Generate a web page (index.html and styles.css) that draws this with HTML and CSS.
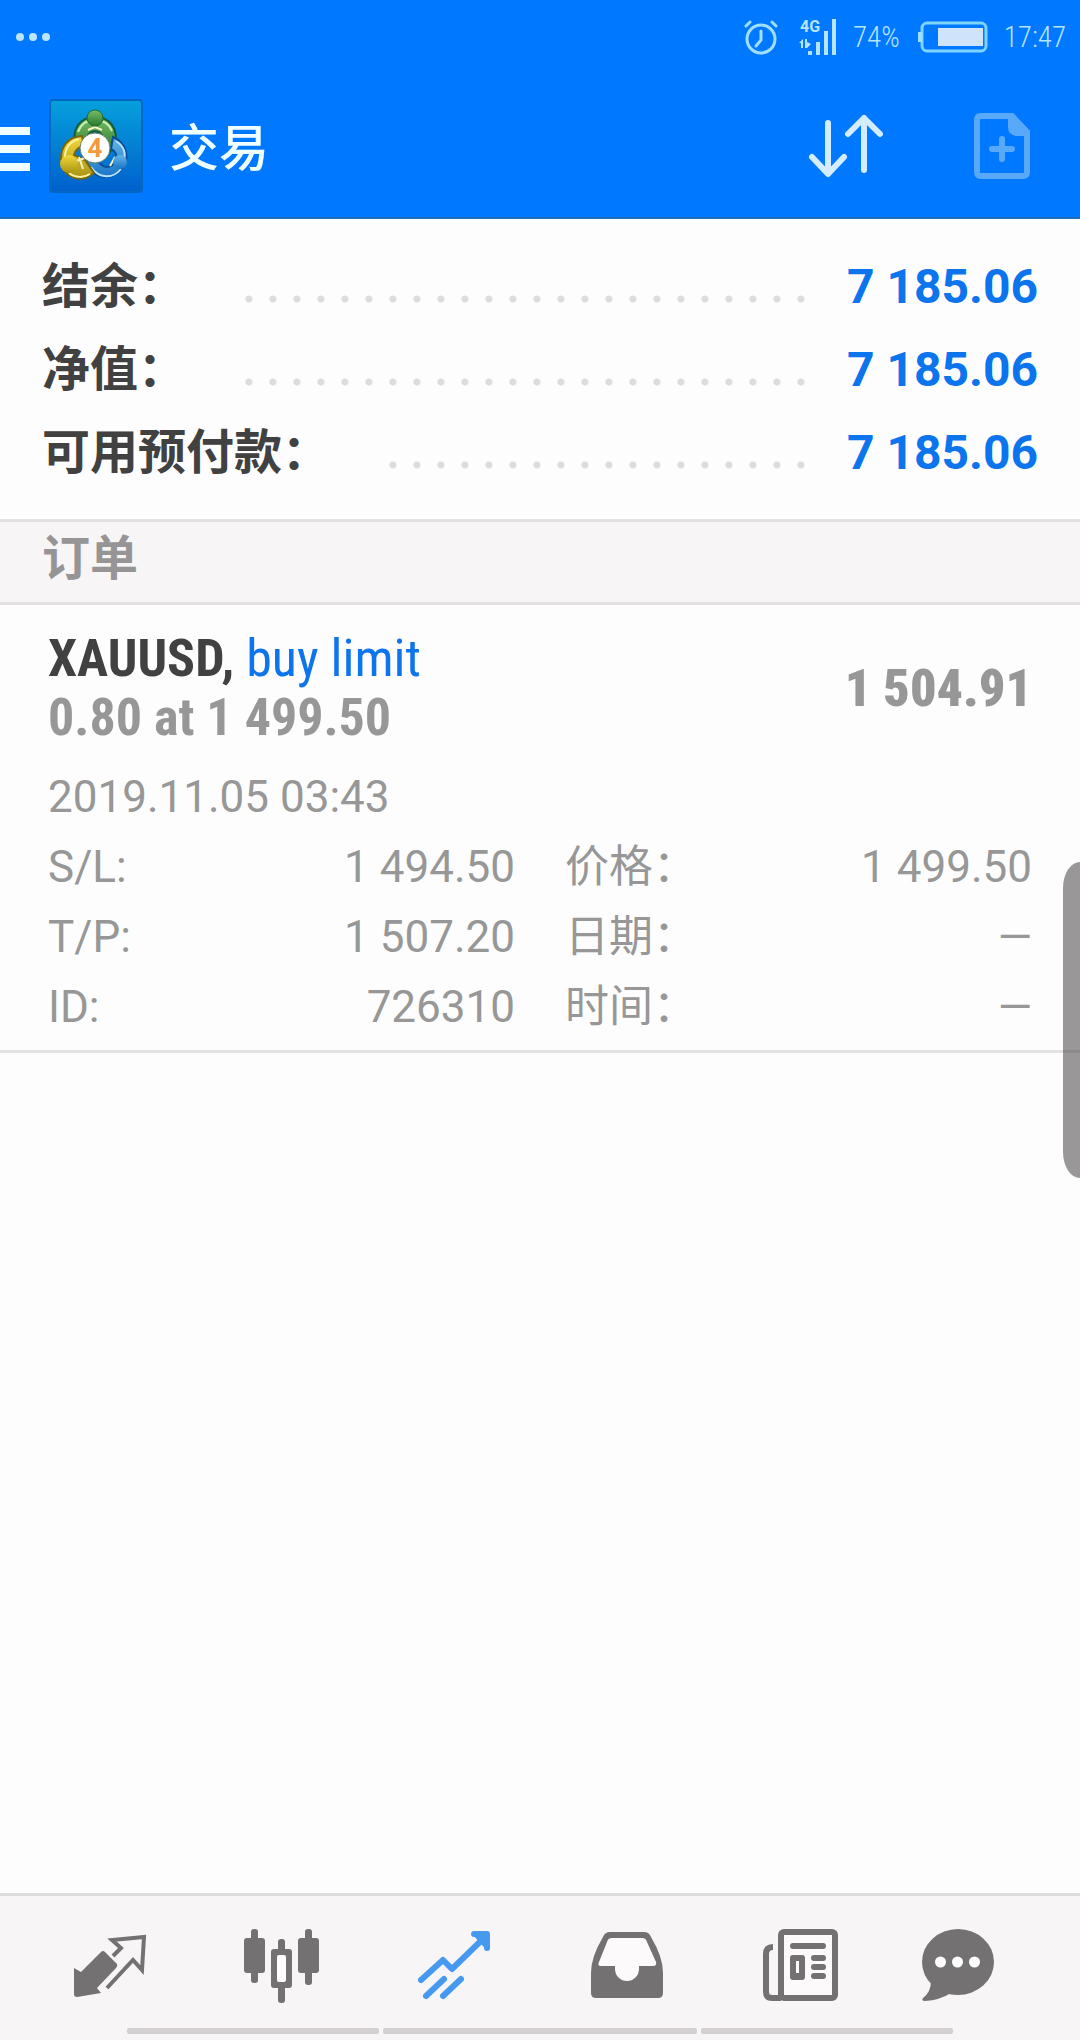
FILE: index.html
```html
<!DOCTYPE html>
<html lang="zh-CN">
<head>
  <meta charset="UTF-8" />
  <meta name="viewport" content="width=device-width, initial-scale=1" />
  <title>交易</title>
  <link rel="stylesheet" href="styles.css">
</head>
<body>
  <header class="top">
    <div class="status">
      <svg class="status-more" width="36" height="10" viewBox="0 0 36 10" fill="#b9e6ff">
        <circle cx="5" cy="5" r="4" /><circle cx="18" cy="5" r="4" /><circle cx="31" cy="5" r="4" />
      </svg>
      <svg width="36" height="36" viewBox="0 0 36 36" fill="none" stroke="#9fe0ff" stroke-width="3" stroke-linecap="round">
        <circle cx="18" cy="20" r="14" />
        <path d="M18 12v9l-5 6M3 7l4-4M33 7l-4-4" />
      </svg>
      <svg class="signal" width="38" height="52" viewBox="0 -8 38 52" fill="#b4e4ff">
        <text class="signal-type" x="1" y="13">4G</text>
        <path d="M9 32h4v4H9zM17 23h4v13h-4zM25 12h4v24h-4zM33 0h4v36h-4z" />
        <path d="M0 24l4-4v9H2v-5zM6 20h2v3l4 2-4 4H6z" />
      </svg>
      <span>74%</span>
      <svg width="70" height="32" viewBox="0 0 70 32">
        <rect x="4" y="2" width="64" height="28" rx="5" fill="none" stroke="#7fd3ff" stroke-width="3" />
        <path d="M0 11h4v10H0z" fill="#9fe0ff" />
        <path d="M20 7h45v18H20z" fill="#cfe4fa" />
      </svg>
      <time>17:47</time>
    </div>
    <div class="toolbar">
      <button class="menu" type="button" aria-label="菜单">
        <svg width="30" height="44" viewBox="0 0 30 44" fill="#f0ffff">
          <path d="M0 0h30v8H0zM0 18h30v8H0zM0 36h30v8H0z" />
        </svg>
      </button>
      <svg class="logo" width="94" height="94" viewBox="0 0 94 94">
        <defs>
          <linearGradient id="tile" x1="0" y1="0" x2="0" y2="1">
            <stop offset="0" stop-color="#06a0dc" /><stop offset="1" stop-color="#0060cc" />
          </linearGradient>
          <linearGradient id="green" x1="0" y1="0" x2="0" y2="1">
            <stop offset="0" stop-color="#79bd68" /><stop offset="1" stop-color="#27792d" />
          </linearGradient>
          <linearGradient id="yellow" x1="0" y1="0" x2="0" y2="1">
            <stop offset="0" stop-color="#f3d83c" /><stop offset="1" stop-color="#a99312" />
          </linearGradient>
          <linearGradient id="blue" x1="0" y1="0" x2="0" y2="1">
            <stop offset="0" stop-color="#66b5e6" /><stop offset="1" stop-color="#1976c8" />
          </linearGradient>
        </defs>
        <rect x="1" y="1" width="92" height="92" rx="3" fill="url(#tile)" stroke="#0667c2" stroke-width="2" />
        <path d="M26 44c-3-15 6-26 20-26s24 11 20 28l-6 8-7-18c-3-5-11-5-14 0l-6 12z" fill="url(#green)" stroke="#155b34" stroke-width="2" />
        <path d="M29 33c3-8 9-12 17-12s14 4 17 11" fill="none" stroke="#c9efb4" stroke-width="2" />
        <path d="M64 38c13 6 17 20 10 30-8 13-26 13-33 1l-6-10 14 3c5 8 14 8 18-1 2-5-1-9-5-11z" fill="url(#blue)" stroke="#0b4d99" stroke-width="2" />
        <path d="M42 68c8 12 22 12 30 2M67 42c9 6 10 14 7 21" fill="none" stroke="#b8e4ff" stroke-width="2" />
        <path d="M33 37c-15 1-21 11-21 23 0 15 13 22 25 19l8-5-9-13-11-5c1-5 5-8 10-9z" fill="url(#yellow)" stroke="#77660c" stroke-width="2" />
        <path d="M30 40c-9 2-14 9-14 18M20 74c6 5 15 5 21 1" fill="none" stroke="#fff3a0" stroke-width="2" />
        <path d="M30 58l4 12M27 62l9-3M66 58l-5 9M39 31l7-3 7 3" fill="none" stroke="#f6f2c8" stroke-width="2" />
        <circle cx="46" cy="19" r="8" fill="url(#green)" stroke="#1d6b30" />
        <circle cx="20" cy="65" r="9" fill="url(#yellow)" />
        <circle cx="71" cy="63" r="7" fill="url(#blue)" />
        <circle cx="46" cy="49" r="15" fill="#fff" stroke="#6b7f6b" stroke-width="1" />
        <text class="logo-mark" x="46" y="58" text-anchor="middle">4</text>
      </svg>
      <h1>交易</h1>
      <button type="button" aria-label="排序">
        <svg width="76" height="66" viewBox="0 0 76 66" fill="none" stroke="#d3edff" stroke-width="6" stroke-linecap="round" stroke-linejoin="round">
          <path d="M20 10v50M4 44l16 17 16-17M56 57V5M40 21L56 5l16 16" />
        </svg>
      </button>
      <button class="new-order" type="button" aria-label="新订单">
        <svg width="56" height="66" viewBox="0 0 56 66" fill="none" stroke="#59a9fb" stroke-width="6">
          <path d="M3 7q0-4 4-4h31l15 16v40q0 4-4 4H7q-4 0-4-4z" />
          <path d="M34 2h5l15 15v6H42q-8-1-8-9z" fill="#59a9fb" stroke="none" />
          <path d="M28 26v20M18 36h20" stroke-linecap="round" />
        </svg>
      </button>
    </div>
  </header>

  <main>
    <dl class="account">
      <div class="account-row"><dt>结余：</dt><dd>7 185.06</dd></div>
      <div class="account-row"><dt>净值：</dt><dd>7 185.06</dd></div>
      <div class="account-row"><dt>可用预付款：</dt><dd>7 185.06</dd></div>
    </dl>

    <h2>订单</h2>

    <article class="order">
      <div class="order-head">
        <div>
          <h3>XAUUSD, <span class="side">buy limit</span></h3>
          <p>0.80 at 1 499.50</p>
        </div>
        <strong>1 504.91</strong>
      </div>
      <time class="opened">2019.11.05 03:43</time>
      <dl class="details">
        <div><dt>S/L:</dt><dd>1 494.50</dd></div>
        <div><dt>价格：</dt><dd>1 499.50</dd></div>
        <div><dt>T/P:</dt><dd>1 507.20</dd></div>
        <div><dt>日期：</dt><dd>—</dd></div>
        <div><dt>ID:</dt><dd>726310</dd></div>
        <div><dt>时间：</dt><dd>—</dd></div>
      </dl>
    </article>
  </main>

  <nav class="bottom">
    <div class="tabs">
      <a href="#quotes" aria-label="行情">
        <svg width="80" height="80" viewBox="0 0 80 80" fill="#737172">
          <path d="M33 27q2-2 4 0l12 12q1 2-1 4L29 63l4 5-24 4q-3 0-3-3V43l7 4z" />
          <path d="M45 31l8-8-9-8 32-3-2 33-9-10-26 28" fill="none" stroke="#737172" stroke-width="4" />
        </svg>
      </a>
      <a href="#chart" aria-label="图表">
        <svg width="80" height="80" viewBox="0 0 80 80" fill="#737172">
          <rect x="10" y="4" width="7" height="54" rx="3" /><rect x="3" y="13" width="21" height="35" rx="3" />
          <rect x="37" y="14" width="7" height="64" rx="3" /><rect x="30" y="24" width="21" height="39" rx="3" />
          <rect x="64" y="4" width="7" height="56" rx="3" /><rect x="57" y="13" width="21" height="35" rx="3" />
          <rect x="36" y="30" width="9" height="27" rx="2" fill="#fff" />
        </svg>
      </a>
      <a href="#trade" aria-label="交易" aria-current="page">
        <svg width="80" height="80" viewBox="0 0 80 80" fill="none" stroke="#4599ee" stroke-width="6" stroke-linecap="round" stroke-linejoin="round">
          <path d="M7 55l22-20 9 9L72 11M12 71l18-17M29 71l18-17" />
          <path d="M60 9h13v14M63 10l9 10" />
        </svg>
      </a>
      <a href="#history" aria-label="历史">
        <svg width="80" height="80" viewBox="0 0 80 80">
          <path d="M16 12q2-5 7-5h34q5 0 7 5 12 20 12 36v20q0 5-5 5H9q-5 0-5-5V48q0-16 12-36z" fill="#737172" />
          <path d="M20 17q1-4 5-4h30q4 0 5 4l9 20q1 4-3 4H52v3a12 12 0 0 1-24 0v-3H14q-4 0-2-4z" fill="#fcfafb" />
        </svg>
      </a>
      <a href="#news" aria-label="新闻">
        <svg width="80" height="80" viewBox="0 0 80 80" fill="#737172">
          <rect x="21" y="7" width="54" height="66" rx="3" fill="#fcfafb" stroke="#737172" stroke-width="6" />
          <path d="M13 22q-7 0-7 7v38q0 6 6 6h9" fill="none" stroke="#737172" stroke-width="6" />
          <rect x="30" y="18" width="36" height="6" rx="3" />
          <rect x="30" y="30" width="15" height="25" rx="3" />
          <rect x="51" y="30" width="15" height="6" rx="3" />
          <rect x="51" y="39" width="15" height="6" rx="3" />
          <rect x="51" y="48" width="15" height="6" rx="3" />
          <path d="M36 36h3v12h-3z" fill="#fff" />
        </svg>
      </a>
      <a href="#chat" aria-label="聊天">
        <svg width="80" height="80" viewBox="0 0 80 80" fill="#737172">
          <ellipse cx="40" cy="37" rx="36" ry="33" />
          <path d="M13 56q0 11-8 17-2 3 2 3 15-1 26-8z" />
          <path d="M17 37a5 5 0 1 1 11 0 5 5 0 1 1-11 0M34 37a5 5 0 1 1 11 0 5 5 0 1 1-11 0M51 37a5 5 0 1 1 11 0 5 5 0 1 1-11 0" fill="#fff" />
        </svg>
      </a>
    </div>
    <div class="gesture-bars"><span></span><span></span><span></span></div>
  </nav>

  <div class="edge-handle"></div>
</body>
</html>
```

FILE: styles.css
```css
* {
  box-sizing: border-box;
  margin: 0;
  padding: 0;
}
body {
  display: flex;
  flex-direction: column;
  min-height: 100vh;
  background: #fdfdfd;
  color: #424142;
  font-family: Roboto, "Noto Sans CJK SC", sans-serif;
  font-size: 44px;
}
svg {
  display: block;
  flex: none;
}
button {
  background: none;
  border: none;
  cursor: pointer;
}

/* header */
.top {
  background: #0078ff;
  border-bottom: 2px solid #1f6fc0;
}
.status {
  display: flex;
  align-items: center;
  height: 74px;
  padding: 0 14px 0 15px;
  color: #b4e4ff;
  font-family: "Roboto Condensed", Roboto, sans-serif;
  font-size: 29px;
  font-weight: 300;
  line-height: 32px;
}
.status-more {
  margin-right: auto;
}
.signal {
  margin: 0 16px 0 20px;
}
.signal-type {
  font: bold 16px Roboto, sans-serif;
}
.status span {
  margin-right: 18px;
}
.status time {
  margin-left: 16px;
}
.toolbar {
  display: flex;
  align-items: center;
  height: 143px;
  padding-right: 50px;
}
.menu {
  margin-right: 19px;
  padding-top: 6px;
}
.logo-mark {
  font: bold 26px Roboto, sans-serif;
  fill: #f39a3d;
}
h1 {
  flex: 1;
  margin-left: 26px;
  padding-top: 6px;
  color: #f0ffff;
  font-size: 50px;
  font-weight: 500;
  line-height: 72px;
}
.new-order {
  margin-left: 90px;
}

/* account summary */
.account {
  padding: 26px 42px 25px;
  font-size: 48px;
  font-weight: 700;
  line-height: 83px;
}
.account-row {
  display: flex;
  align-items: center;
  height: 83px;
}
.account-row::after {
  content: "";
  order: 1;
  flex: 1;
  height: 8px;
  margin: 24px 34px 0 48px;
  background: radial-gradient(circle, #dcdcdc 3px, transparent 4px) right / 24px 8px;
}
.account dd {
  order: 2;
  color: #0c74ec;
}
h2 {
  padding: 1px 42px 8px;
  background: #f7f5f6;
  border-top: 3px solid #e3e1e2;
  border-bottom: 3px solid #e3e1e2;
  color: #969495;
  font-size: 48px;
  font-weight: 700;
  line-height: 71px;
}

/* pending order */
.order {
  padding: 24px 48px 8px;
  border-bottom: 3px solid #e3e3e3;
  color: #979797;
}
.order-head {
  display: flex;
  align-items: center;
  justify-content: space-between;
  font-family: "Roboto Condensed", "Liberation Sans Narrow", Roboto, sans-serif;
  font-size: 52px;
  font-weight: 700;
  line-height: 59px;
}
h3 {
  color: #424142;
  font-size: 52px;
}
.side {
  color: #0c74ec;
  font-weight: 400;
}
.opened {
  display: block;
  margin-top: 15px;
  line-height: 70px;
}
.details {
  display: grid;
  grid-template-columns: 1fr 1fr;
  column-gap: 50px;
  line-height: 70px;
}
.details div {
  display: flex;
  justify-content: space-between;
  height: 70px;
}

/* bottom tabs */
.bottom {
  margin-top: auto;
  padding-bottom: 6px;
  background: #f7f5f6;
  border-top: 3px solid #dddbdc;
}
.tabs {
  display: grid;
  grid-template-columns: repeat(5, 6fr) 5fr;
  justify-items: center;
  padding: 29px 50px 23px 22px;
}
.gesture-bars {
  display: grid;
  grid-template-columns: 4fr 5fr 4fr;
  column-gap: 4px;
  margin: 0 127px;
}
.gesture-bars span {
  height: 6px;
  border-radius: 2px;
  background: #d4d0d2;
}

.edge-handle {
  position: fixed;
  top: 862px;
  right: 0;
  width: 17px;
  height: 316px;
  border-radius: 17px 0 0 17px / 26px 0 0 26px;
  background: rgba(55, 50, 52, 0.5);
}
```
